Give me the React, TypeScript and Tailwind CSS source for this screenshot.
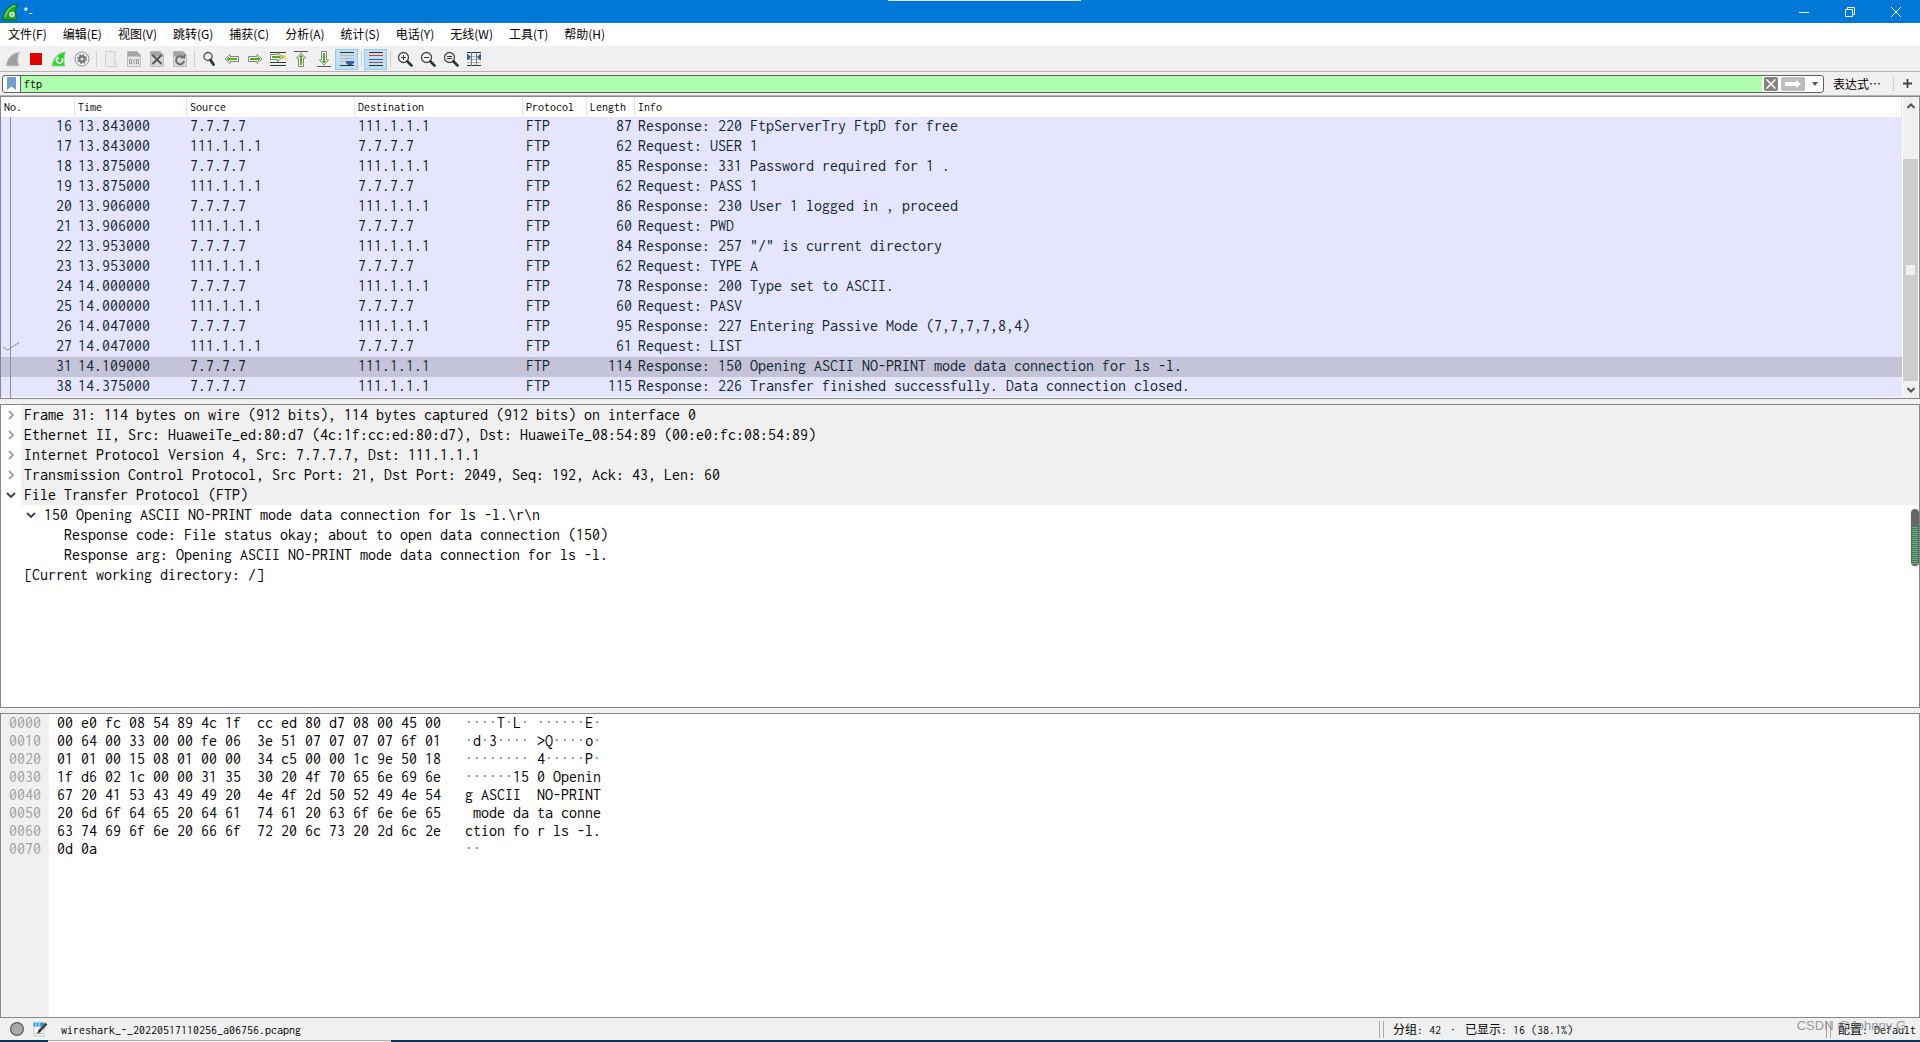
import type { ReactNode } from "react";

const MONO = "font-[Inconsolata,'Noto_Sans_Mono_CJK_SC','Liberation_Mono',monospace]";
const UI = "font-['Noto_Sans_CJK_SC','Noto_Sans',sans-serif]";

const menus = [
  "文件(F)", "编辑(E)", "视图(V)", "跳转(G)", "捕获(C)", "分析(A)",
  "统计(S)", "电话(Y)", "无线(W)", "工具(T)", "帮助(H)",
];

type Packet = { no: number; time: string; out: boolean; len: number; info: string };

const packets: Packet[] = [
  { no: 16, time: "13.843000", out: true, len: 87, info: "Response: 220 FtpServerTry FtpD for free" },
  { no: 17, time: "13.843000", out: false, len: 62, info: "Request: USER 1" },
  { no: 18, time: "13.875000", out: true, len: 85, info: "Response: 331 Password required for 1 ." },
  { no: 19, time: "13.875000", out: false, len: 62, info: "Request: PASS 1" },
  { no: 20, time: "13.906000", out: true, len: 86, info: "Response: 230 User 1 logged in , proceed" },
  { no: 21, time: "13.906000", out: false, len: 60, info: "Request: PWD" },
  { no: 22, time: "13.953000", out: true, len: 84, info: 'Response: 257 "/" is current directory' },
  { no: 23, time: "13.953000", out: false, len: 62, info: "Request: TYPE A" },
  { no: 24, time: "14.000000", out: true, len: 78, info: "Response: 200 Type set to ASCII." },
  { no: 25, time: "14.000000", out: false, len: 60, info: "Request: PASV" },
  { no: 26, time: "14.047000", out: true, len: 95, info: "Response: 227 Entering Passive Mode (7,7,7,7,8,4)" },
  { no: 27, time: "14.047000", out: false, len: 61, info: "Request: LIST" },
  { no: 31, time: "14.109000", out: true, len: 114, info: "Response: 150 Opening ASCII NO-PRINT mode data connection for ls -l." },
  { no: 38, time: "14.375000", out: true, len: 115, info: "Response: 226 Transfer finished successfully. Data connection closed." },
];

const protocols = [
  { open: false, text: "Frame 31: 114 bytes on wire (912 bits), 114 bytes captured (912 bits) on interface 0" },
  { open: false, text: "Ethernet II, Src: HuaweiTe_ed:80:d7 (4c:1f:cc:ed:80:d7), Dst: HuaweiTe_08:54:89 (00:e0:fc:08:54:89)" },
  { open: false, text: "Internet Protocol Version 4, Src: 7.7.7.7, Dst: 111.1.1.1" },
  { open: false, text: "Transmission Control Protocol, Src Port: 21, Dst Port: 2049, Seq: 192, Ack: 43, Len: 60" },
  { open: true, text: "File Transfer Protocol (FTP)" },
];

const hex = [
  ["0000", "00 e0 fc 08 54 89 4c 1f  cc ed 80 d7 08 00 45 00", "····T·L· ······E·"],
  ["0010", "00 64 00 33 00 00 fe 06  3e 51 07 07 07 07 6f 01", "·d·3···· >Q····o·"],
  ["0020", "01 01 00 15 08 01 00 00  34 c5 00 00 1c 9e 50 18", "········ 4·····P·"],
  ["0030", "1f d6 02 1c 00 00 31 35  30 20 4f 70 65 6e 69 6e", "······15 0 Openin"],
  ["0040", "67 20 41 53 43 49 49 20  4e 4f 2d 50 52 49 4e 54", "g ASCII  NO-PRINT"],
  ["0050", "20 6d 6f 64 65 20 64 61  74 61 20 63 6f 6e 6e 65", " mode da ta conne"],
  ["0060", "63 74 69 6f 6e 20 66 6f  72 20 6c 73 20 2d 6c 2e", "ction fo r ls -l."],
  ["0070", "0d 0a", "··"],
];

function Icon({ children }: { children: ReactNode }) {
  return (
    <svg width="16" height="16" viewBox="0 0 16 16" fill="none" aria-hidden="true">
      {children}
    </svg>
  );
}

const FIN = "M1 15C2 8 6 2 14.500 1C12.500 5 12.500 10 14 15Z";
const PAGE = "M1.500 .5H11L14.500 4V15.500H1.500Z";

/* Right-pointing arrow with a white rim, rotated for the other directions. */
function Arrow({ turn, className }: { turn: string; className?: string }) {
  return (
    <g transform={turn} className={className}>
      <path d="M15 8L10 3.500V5.500H1.500V10.500H10V12.500Z" fill="#fff" stroke="#80867c" />
      <path d="M13.500 8L11 5.500V7H3V9H11V10.500Z" fill="#4fb010" />
    </g>
  );
}

function Lens({ children }: { children?: ReactNode }) {
  return (
    <Icon>
      <circle cx="6.500" cy="6.500" r="5" fill="#f4f4f4" stroke="#454b50" strokeWidth="1.300" />
      <path d="M10.500 10.500L14.500 14.500" stroke="#2e3436" strokeWidth="2.600" strokeLinecap="round" />
      {children}
    </Icon>
  );
}

const icons: Record<string, ReactNode> = {
  start: <Icon><path d={FIN} fill="#a0a0a0" stroke="#d4d4d4" /></Icon>,
  stop: <Icon><path d="M1 1H15V15H1Z" fill="#fff" opacity=".7" /><path d="M2 2H14V14H2Z" fill="#e00000" /></Icon>,
  restart: (
    <Icon>
      <path d={FIN} fill="#1fe01f" stroke="#a5c8a5" />
      <path d="M6 7.500A3 3 0 1 0 11 7.500" stroke="#fff" strokeWidth="1.600" />
      <path d="M4.500 8.500L6.500 5L8.500 8Z" fill="#fff" />
    </Icon>
  ),
  options: (
    <Icon>
      <circle cx="8" cy="8" r="7" fill="#f4f4f4" stroke="#8c8c8c" />
      <circle cx="8" cy="8" r="3.700" fill="#747474" />
      <circle cx="8" cy="8" r="4.200" stroke="#747474" strokeWidth="1.600" strokeDasharray="1.700 1.600" />
      <circle cx="8" cy="8" r="1.600" fill="#e8e8e8" />
    </Icon>
  ),
  open: <Icon><path d="M2.500 .5H12V12H14V15.500H2.500Z" fill="#ececec" stroke="#cfcfcf" /></Icon>,
  save: (
    <Icon>
      <path d={PAGE} fill="#e4e4e4" stroke="#c0c0c0" />
      <path d="M1.500 .5H11L14.500 4V5.500H1.500Z" fill="#a6a6a6" />
      <path d="M3.500 8.500H5.500V12.500H3.500ZM10.500 8.500H12.500V12.500H10.500ZM8 8V13" stroke="#999" />
    </Icon>
  ),
  close: (
    <Icon>
      <path d={PAGE} fill="#d6d6d6" stroke="#c0c0c0" />
      <path d="M1.500 .5H11L14.500 4V5.500H1.500Z" fill="#a6a6a6" />
      <path d="M3.500 4L12.500 13M12.500 4L3.500 13" stroke="#555" strokeWidth="2" />
    </Icon>
  ),
  reload: (
    <Icon>
      <path d={PAGE} fill="#d6d6d6" stroke="#c0c0c0" />
      <path d="M1.500 .5H11L14.500 4V5.500H1.500Z" fill="#a6a6a6" />
      <path d="M11 6.500A4 4 0 1 0 12 10" stroke="#6e6e6e" strokeWidth="2" />
      <path d="M8.500 7.500H13V3Z" fill="#6e6e6e" />
    </Icon>
  ),
  find: (
    <Icon>
      <circle cx="7" cy="5.500" r="4" fill="#eef2f4" stroke="#50565a" strokeWidth="1.400" />
      <path d="M9.500 9L12.500 13.500" stroke="#2e3436" strokeWidth="2.800" strokeLinecap="round" />
    </Icon>
  ),
  back: <Icon><Arrow turn="rotate(180 8 8)" /></Icon>,
  forward: <Icon><Arrow turn="rotate(0)" /></Icon>,
  goto: (
    <Icon>
      <path d="M0 1.500H16M0 11.500H16M0 14.500H16" stroke="#2e3436" />
      <path d="M12 4H16V8H12Z" fill="#f6d94a" />
      <path d="M.5 3.500H7.500V1.500L13 6L7.500 10.500V8.500H.5Z" fill="#fff" stroke="#80867c" />
      <path d="M2 5H8.500V4L11.500 6L8.500 8V7H2Z" fill="#4fb010" />
    </Icon>
  ),
  first: <Icon><path d="M1 .5H15" stroke="#555" /><Arrow turn="translate(0 1) rotate(-90 8 8)" /></Icon>,
  last: <Icon><path d="M1 15.500H15" stroke="#555" /><Arrow turn="translate(0 -1) rotate(90 8 8)" /></Icon>,
  autoscroll: (
    <Icon>
      <path d="M1 1.500H15M1 14.500H15" stroke="#2e3436" />
      <path d="M1 4.500H15M1 7.500H15M1 10.500H15" stroke="#b4b8b4" />
      <path d="M7 10H15V12L13 14H9L7 12Z" fill="#3465a4" />
    </Icon>
  ),
  colorize: (
    <Icon>
      <path d="M1 1.500H15M1 14.500H15" stroke="#2e3436" />
      <path d="M1 4.500H15" stroke="#ef2929" />
      <path d="M1 8.500H15" stroke="#3465a4" />
      <path d="M1 11.500H15" stroke="#75507b" />
    </Icon>
  ),
  zoomIn: <Lens><path d="M4 6.500H9M6.500 4V9" stroke="#2e3436" /></Lens>,
  zoomOut: <Lens><path d="M4 6.500H9" stroke="#2e3436" /></Lens>,
  zoomReset: <Lens><path d="M4 5.500H9M4 7.500H9" stroke="#2e3436" /></Lens>,
  resize: (
    <Icon>
      <path d="M1 1.500H15M1 14.500H15" stroke="#2e3436" />
      <path d="M1 5.500H15M1 8.500H15M1 11.500H15" stroke="#b4b8b4" />
      <path d="M5.500 1V15M10.500 1V15" stroke="#777" />
      <path d="M1 3H2L5 6L2 9H1ZM15 3H14L11 6L14 9H15Z" fill="#2f62a8" />
    </Icon>
  ),
};

const toolGroups: { name: string; label: string; on?: boolean }[][] = [
  [
    { name: "start", label: "Start capture" },
    { name: "stop", label: "Stop capture" },
    { name: "restart", label: "Restart capture" },
    { name: "options", label: "Capture options" },
  ],
  [
    { name: "open", label: "Open" },
    { name: "save", label: "Save" },
    { name: "close", label: "Close" },
    { name: "reload", label: "Reload" },
  ],
  [
    { name: "find", label: "Find packet" },
    { name: "back", label: "Previous packet" },
    { name: "forward", label: "Next packet" },
    { name: "goto", label: "Go to packet" },
    { name: "first", label: "First packet" },
    { name: "last", label: "Last packet" },
    { name: "autoscroll", label: "Auto scroll", on: true },
  ],
  [{ name: "colorize", label: "Colorize", on: true }],
  [
    { name: "zoomIn", label: "Zoom in" },
    { name: "zoomOut", label: "Zoom out" },
    { name: "zoomReset", label: "Normal size" },
    { name: "resize", label: "Resize columns" },
  ],
];

function Chevron({ open }: { open: boolean }) {
  return (
    <svg width="10" height="10" viewBox="0 0 10 10" fill="none" aria-hidden="true">
      {open ? (
        <path d="M1 3L5 7L9 3" stroke="#404040" strokeWidth="1.800" />
      ) : (
        <path d="M3 1L7 5L3 9" stroke="#a0a0a0" strokeWidth="1.800" />
      )}
    </svg>
  );
}

function TitleBar() {
  return (
    <header className="relative flex h-[23px] shrink-0 items-center bg-[#0078d7] text-white">
      <div className="absolute top-0 left-[888px] h-px w-[193px] bg-[#dfe6ea]" />
      <svg className="ml-[2px]" width="16" height="18" viewBox="0 0 16 18" aria-hidden="true">
        <path d="M.5 17C1.500 9 6 2 15.500 1C13 6 13.500 12 15 17Z" fill="#22a322" stroke="#116b2a" />
        <path d="M3 14C4 9 8 4 13 2.500" stroke="#6fdc5c" strokeWidth="1.500" fill="none" />
        <circle cx="10" cy="11.500" r="2.700" fill="#d8f5d0" />
        <circle cx="10" cy="11.500" r="1" fill="#3aa53a" />
      </svg>
      <h1 className={`${UI} ml-[5px] text-xs leading-4`}>*-</h1>
      <div className="ml-auto flex h-full items-center pr-px">
        <button aria-label="Minimize" className="flex w-[46px] justify-center">
          <svg width="10" height="10" viewBox="0 0 10 10"><path d="M0 5.500H10" stroke="#fff" /></svg>
        </button>
        <button aria-label="Restore" className="flex w-[46px] justify-center">
          <svg width="10" height="10" viewBox="0 0 10 10" fill="none" stroke="#fff"><path d="M.5 2.500H7.500V9.500H.5ZM2.500 2.500V.5H9.500V7.500H7.500" /></svg>
        </button>
        <button aria-label="Close" className="flex w-[46px] justify-center">
          <svg width="10" height="10" viewBox="0 0 10 10" stroke="#fff"><path d="M0 0L10 10M10 0L0 10" /></svg>
        </button>
      </div>
    </header>
  );
}

function MenuBar() {
  return (
    <nav className="flex h-6 shrink-0 items-center gap-4 border-b border-[#f0f0f0] bg-white pb-px pl-2">
      {menus.map((m) => (
        <button key={m} className={`${UI} text-xs leading-4 whitespace-nowrap text-black`}>{m}</button>
      ))}
    </nav>
  );
}

function ToolBar() {
  return (
    <div role="toolbar" className="flex h-[25px] shrink-0 items-center border-b border-[#b4b4b4] bg-[#f0f0f0] pl-px">
      {toolGroups.map((group, i) => (
        <div key={i} className="flex items-center">
          {i > 0 && (
            <div className="flex w-[6px] justify-center"><div className="h-4 w-px bg-[#cfcfcf]" /></div>
          )}
          {group.map((t) => (
            <button
              key={t.name}
              aria-label={t.label}
              className={
                t.on
                  ? "flex h-[21px] w-[23px] items-center justify-center border border-[#90c8f6] bg-[#c3ddf1]"
                  : "flex h-[21px] w-[23px] items-center justify-center"
              }
            >
              {icons[t.name]}
            </button>
          ))}
        </div>
      ))}
    </div>
  );
}

function FilterBar() {
  return (
    <div className="flex h-6 shrink-0 items-center border-b border-[#b4b4b4] bg-[#f0f0f0] pl-[2px]">
      <div className="flex h-[18px] flex-1 items-center overflow-hidden rounded-[3px] border border-[#5f5f5f] bg-white">
        <button aria-label="Filter bookmarks" className="flex h-full w-[17px] items-center justify-center">
          <svg width="9" height="13" viewBox="0 0 9 13"><path d="M0 0H9V13L4.500 9.500L0 13Z" fill="#729fcf" /></svg>
        </button>
        <input
          aria-label="Display filter"
          defaultValue="ftp"
          className={`${MONO} h-full min-w-0 flex-1 border-l border-[#5f5f5f] bg-[#afffaf] pl-[3px] text-xs text-black outline-none`}
        />
        <button aria-label="Clear filter" className="ml-[2px] flex size-[14px] items-center justify-center rounded-[2px] bg-[#85857f]">
          <svg width="10" height="10" viewBox="0 0 10 10"><path d="M.5 .5L9.500 9.500M9.500 .5L.5 9.500" stroke="#fff" strokeWidth="1.500" /></svg>
        </button>
        <button aria-label="Apply filter" className="ml-[3px] flex h-[14px] w-6 items-center justify-center rounded-[2px] bg-[#bdbdbd]">
          <svg width="16" height="8" viewBox="0 0 16 8"><path d="M0 2H11V0L16 4L11 8V6H0Z" fill="#fff" /></svg>
        </button>
        <button aria-label="Recent filters" className="ml-[3px] flex h-full w-[15px] items-center justify-center">
          <svg width="6" height="4" viewBox="0 0 6 4"><path d="M0 0H6L3 4Z" fill="#555" /></svg>
        </button>
      </div>
      <button className={`${UI} ml-[9px] text-xs leading-4 text-black`}>表达式⋯</button>
      <div className="ml-[12px] h-[14px] w-px bg-[#cfcfcf]" />
      <button aria-label="Add filter button" className="ml-[9px] mr-[8px]">
        <svg width="9" height="9" viewBox="0 0 9 9"><path d="M0 4.500H9M4.500 0V9" stroke="#444" strokeWidth="1.800" /></svg>
      </button>
    </div>
  );
}

function PacketList() {
  const th = "border-r border-[#e5e5e5] pl-[3px] text-left font-normal";
  return (
    <section className="flex shrink-0 border border-[#828790] bg-white">
      <div className="relative min-w-0 flex-1 pb-px">
        <table className={`${MONO} w-full table-fixed border-separate border-spacing-0`}>
          <thead className="text-xs leading-5 text-black">
            <tr className="h-5">
              <th className={`${th} w-[74px]`}>No.</th>
              <th className={`${th} w-[112px]`}>Time</th>
              <th className={`${th} w-[168px]`}>Source</th>
              <th className={`${th} w-[168px]`}>Destination</th>
              <th className={`${th} w-[64px]`}>Protocol</th>
              <th className={`${th} w-[48px]`}>Length</th>
              <th className={th}>Info</th>
            </tr>
          </thead>
          <tbody className="align-top text-base leading-[18px] whitespace-nowrap text-[#12272e]">
            {packets.map((p) => (
              <tr key={p.no} className={p.no === 31 ? "h-5 bg-[#c5c3d8]" : "h-5 bg-[#e5e5ff]"}>
                <td className="pr-[3px] text-right">{p.no}</td>
                <td className="pl-[3px]">{p.time}</td>
                <td className="pl-[3px]">{p.out ? "7.7.7.7" : "111.1.1.1"}</td>
                <td className="pl-[3px]">{p.out ? "111.1.1.1" : "7.7.7.7"}</td>
                <td className="pl-[3px]">FTP</td>
                <td className="pr-[3px] text-right">{p.len}</td>
                <td className="pl-[3px]">{p.info}</td>
              </tr>
            ))}
          </tbody>
        </table>
        <svg className="absolute top-5 left-0" width="20" height="281" viewBox="0 0 20 281" fill="none" stroke="#8d8d98" aria-hidden="true">
          <path d="M9.500 0V281" />
          <path d="M2 230L6.500 233L18 225.500" />
        </svg>
      </div>
      <div className="ml-px mr-px flex w-[15px] flex-col bg-[#f0f0f0]">
        <button aria-label="Scroll up" className="flex h-[18px] items-center justify-center">
          <svg width="8" height="6" viewBox="0 0 8 6"><path d="M.5 5L4 1.500L7.500 5" stroke="#555" strokeWidth="2" fill="none" /></svg>
        </button>
        <div className="flex flex-1 flex-col pt-11">
          <div className="flex flex-1 justify-center bg-[#cdcdcd] pt-[106px]">
            <div className="h-[10px] w-[9px] bg-[#f0f0f0]" />
          </div>
        </div>
        <button aria-label="Scroll down" className="flex h-[17px] items-center justify-center">
          <svg width="8" height="6" viewBox="0 0 8 6"><path d="M.5 1L4 4.500L7.500 1" stroke="#555" strokeWidth="2" fill="none" /></svg>
        </button>
      </div>
    </section>
  );
}

function PacketDetails() {
  return (
    <section className="relative min-h-0 grow basis-[302px] border border-[#828790] bg-white">
      <ul className={`${MONO} text-base leading-5 whitespace-nowrap text-black`}>
        {protocols.map((p) => (
          <li key={p.text} className="flex h-5">
            <button aria-label="Toggle" className="flex w-5 items-center justify-center"><Chevron open={p.open} /></button>
            <span className="flex-1 bg-[#f0f0f0] pl-[3px]">{p.text}</span>
          </li>
        ))}
        <li className="flex h-5 pl-5">
          <button aria-label="Toggle" className="flex w-5 items-center justify-center"><Chevron open /></button>
          <span className="pl-[3px]">150 Opening ASCII NO-PRINT mode data connection for ls -l.\r\n</span>
        </li>
        <li className="h-5 pl-[63px]">Response code: File status okay; about to open data connection (150)</li>
        <li className="h-5 pl-[63px]">Response arg: Opening ASCII NO-PRINT mode data connection for ls -l.</li>
        <li className="h-5 pl-[23px]">[Current working directory: /]</li>
      </ul>
      <div className="absolute top-[104px] right-0 flex h-[57px] w-2 flex-col overflow-hidden rounded-full bg-[#666] px-px pt-[18px] pb-[2px] shadow">
        <div className="flex-1 bg-[repeating-linear-gradient(to_bottom,#3fc46c_0px,#3fc46c_1px,#666_1px,#666_2px)]" />
      </div>
    </section>
  );
}

function PacketBytes() {
  return (
    <section className="min-h-0 grow basis-[303px] border border-[#828790] bg-white">
      <div className="flex h-full">
        <div className={`${MONO} w-12 shrink-0 bg-[#f0f0f0] pl-2 text-base leading-[18px] text-[#a0a0a0]`}>
          {hex.map(([off]) => <div key={off}>{off}</div>)}
        </div>
        <div className={`${MONO} pl-2 text-base leading-[18px] whitespace-pre text-black`}>
          {hex.map(([off, bytes]) => <div key={off}>{bytes}</div>)}
        </div>
        <div className={`${MONO} pl-6 text-base leading-[18px] whitespace-pre text-black`}>
          {hex.map(([off, , ascii]) => (
            <div key={off}>
              {ascii.split(/(·+)/).map((s, i) => (
                <span key={i} className={s.startsWith("·") ? "text-[#808080]" : ""}>{s}</span>
              ))}
            </div>
          ))}
        </div>
      </div>
    </section>
  );
}

function Grip() {
  return <div className="h-[17px] w-[5px] shrink-0 border-x border-[#a8a8a8]" />;
}

function StatusBar() {
  return (
    <footer className={`${MONO} relative flex h-[22px] shrink-0 items-center text-xs leading-4 whitespace-nowrap text-black`}>
      <button aria-label="Expert information" className="ml-[10px]">
        <svg width="14" height="14" viewBox="0 0 14 14"><circle cx="7" cy="7" r="6.400" fill="#a9aca5" stroke="#5c5e5a" strokeWidth="1.200" /></svg>
      </button>
      <button aria-label="Capture comment" className="ml-[9px]">
        <svg width="15" height="15" viewBox="0 0 15 15" fill="none">
          <path d="M1 1H11V14H1Z" fill="#f7f7f7" stroke="#c4c8cc" />
          <path d="M.5 .5H11V4.500H.5Z" fill="#2f9be0" />
          <path d="M3 .5V4M6 .5V4" stroke="#d5ecfb" />
          <path d="M2.500 11.500H9.500" stroke="#9aa" />
          <path d="M13.500 1.500L6 9.500" stroke="#444" strokeWidth="2.600" />
          <path d="M6.800 8.500L5 11" stroke="#222" strokeWidth="1.600" />
        </svg>
      </button>
      <span className="ml-[13px] pt-[2px]">wireshark_-_20220517110256_a06756.pcapng</span>
      <div className="ml-auto flex w-[541px] items-center">
        <Grip />
        <span className="ml-[9px] flex pt-[2px]">分组: 42<span className="mx-[6px] w-3 text-center">·</span>已显示: 16 (38.1%)</span>
        <div className="ml-auto flex items-center pr-1">
          <Grip />
          <span className="ml-[7px] pt-[2px]">配置: Default</span>
        </div>
      </div>
      <span className="absolute top-0 right-[14px] font-['Liberation_Sans',sans-serif] text-[13px] leading-[15px] text-[#808080]/80">CSDN @Johnny G</span>
    </footer>
  );
}

export default function App() {
  return (
    <div className="flex h-screen min-h-[700px] flex-col overflow-hidden bg-[#f0f0f0]">
      <TitleBar />
      <MenuBar />
      <ToolBar />
      <FilterBar />
      <main className="flex min-h-0 flex-1 flex-col gap-[5px]">
        <PacketList />
        <PacketDetails />
        <PacketBytes />
      </main>
      <StatusBar />
      <div className="flex h-[2px] shrink-0 bg-[#05365b]">
        <div className="ml-12 w-[343px] border-t border-[#b4b4b4] bg-[#f0f0f0]" />
      </div>
    </div>
  );
}
